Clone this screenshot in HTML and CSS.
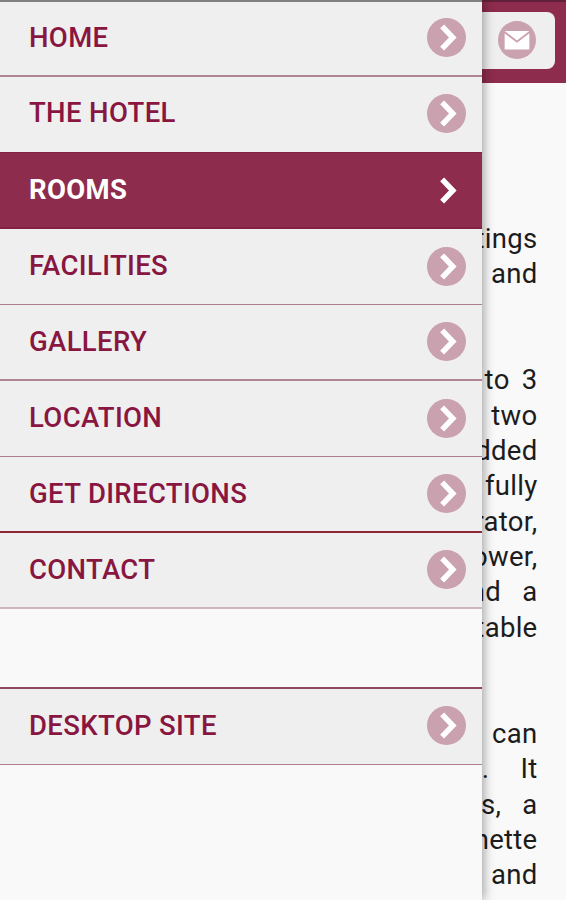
FILE: index.html
```html
<!DOCTYPE html>
<html lang="en">
  <head>
    <meta charset="UTF-8" />
    <meta name="viewport" content="width=device-width, initial-scale=1.0" />
    <title>Rooms</title>
    <link rel="stylesheet" href="styles.css">
  </head>
  <body>
    <svg class="sprite" width="0" height="0">
      <symbol id="arrow" viewBox="0 0 40 40">
        <path d="M15.5 8.5 L26.5 20 L15.5 31.5" fill="none" stroke="#fff" stroke-width="5.6" />
      </symbol>
    </svg>

    <div class="page">
      <header class="header">
        <div class="header-box">
          <svg class="mail" viewBox="0 0 40 40">
            <circle cx="20" cy="20" r="20" fill="#c9a1af" />
            <path d="M7 10.5 H33 L20 20.5 Z M7 13 L20 23 L33 13 V30 H7 Z" fill="#fff" />
          </svg>
        </div>
      </header>
      <main class="content">
        <p>
          <span>settings</span>
          <span>and</span>
        </p>
        <p>
          <span class="wide">to 3</span>
          <span>two</span>
          <span>added</span>
          <span>fully</span>
          <span>refrigerator,</span>
          <span>shower,</span>
          <span class="wider">and a</span>
          <span>suitable</span>
        </p>
        <p>
          <span>can</span>
          <span class="widest">available. It</span>
          <span class="wider">rooms, a</span>
          <span>kitchenette</span>
          <span>and</span>
          <span>in</span>
        </p>
      </main>
    </div>

    <nav class="menu">
      <a class="menu-item" href="#">HOME<svg class="arrow"><use href="#arrow" /></svg></a>
      <a class="menu-item before-active" href="#">THE HOTEL<svg class="arrow"><use href="#arrow" /></svg></a>
      <a class="menu-item active" href="#">ROOMS<svg class="arrow"><use href="#arrow" /></svg></a>
      <a class="menu-item thin" href="#">FACILITIES<svg class="arrow"><use href="#arrow" /></svg></a>
      <a class="menu-item" href="#">GALLERY<svg class="arrow"><use href="#arrow" /></svg></a>
      <a class="menu-item thin" href="#">LOCATION<svg class="arrow"><use href="#arrow" /></svg></a>
      <a class="menu-item dark" href="#">GET DIRECTIONS<svg class="arrow"><use href="#arrow" /></svg></a>
      <a class="menu-item light" href="#">CONTACT<svg class="arrow"><use href="#arrow" /></svg></a>
      <a class="menu-item thin desktop" href="#">DESKTOP SITE<svg class="arrow"><use href="#arrow" /></svg></a>
    </nav>
  </body>
</html>
```

FILE: styles.css
```css
* {
  box-sizing: border-box;
}

body {
  margin: 0;
  height: 900px;
  position: relative;
  overflow: hidden;
  background: #f9f9f9;
  font-family: Roboto, sans-serif;
}

.sprite {
  position: absolute;
}

.page {
  height: 900px;
  overflow: hidden;
}

.header {
  height: 83px;
  padding: 10px 11px 14px 0;
  background: #8d2c4d;
  border-top: 2px solid #612039;
}

.header-box {
  height: 57px;
  padding-right: 19px;
  display: flex;
  align-items: center;
  justify-content: flex-end;
  background: #efefef;
  border-radius: 8px;
}

.mail {
  width: 38px;
  height: 38px;
  margin-bottom: 1px;
}

.content {
  padding: 138px 28.5px 0 0;
  color: #1c1c1c;
  font-size: 27.5px;
  letter-spacing: 0.3px;
  line-height: 35.35px;
  text-align: right;
}

.content p {
  margin: 0 0 70.7px;
}

.content span {
  display: block;
  white-space: nowrap;
}

.content .wide {
  word-spacing: 5px;
}

.content .wider {
  word-spacing: 14px;
}

.content .widest {
  word-spacing: 24px;
}

/* slide-out menu, lies over the page */
.menu {
  position: absolute;
  top: 0;
  left: 0;
  width: 482px;
  height: 900px;
  background: #f9f9f9;
  border-top: 2px solid #808080;
  box-shadow: 2px 0 10px rgba(0, 0, 0, 0.35);
}

.menu-item {
  height: 76px;
  padding: 0 16px 1px 29px;
  display: flex;
  align-items: center;
  justify-content: space-between;
  background: #efefef;
  border-bottom: 2px solid #ae8592;
  color: #881640;
  font-size: 27.5px;
  font-weight: 500;
  letter-spacing: 0.35px;
  line-height: 32px;
  text-decoration: none;
}

.menu-item:first-child {
  height: 75px;
  padding-bottom: 2px;
}

.menu-item.thin {
  border-bottom: 1px solid #ae7f90;
}

.menu-item.before-active {
  padding-bottom: 3px;
  border-bottom: 1px solid #851f43;
}

.menu-item.dark {
  border-color: #8c2833;
}

.menu-item.light {
  border-color: #cdb6c0;
}

.menu-item.active {
  padding-bottom: 0;
  background: #8d2c4d;
  border-color: #851f43;
  color: #fff;
  font-weight: 700;
}

.menu-item.desktop {
  height: 78px;
  margin-top: 78px;
  padding-bottom: 2px;
  border-top: 2px solid #914763;
}

.arrow {
  width: 39px;
  height: 39px;
  border-radius: 50%;
  background: #c9a1af;
}

.active .arrow {
  background: none;
}
```
